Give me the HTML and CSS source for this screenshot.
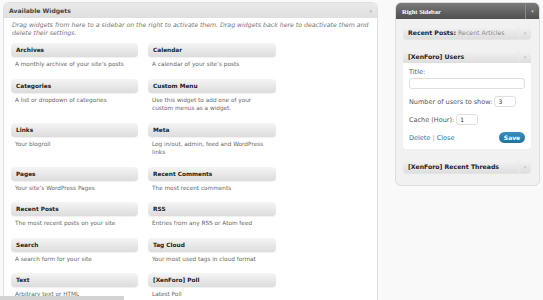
FILE: index.html
```html
<!DOCTYPE html>
<html>
<head>
  <title>Widgets</title>
  <link rel="stylesheet" href="styles.css">
</head>

<body>
  <div class="page">
    <div class="col-left">
      <div class="holder">
        <div class="holder-head">
          <span>Available Widgets</span>
          <span class="holder-arrow">&#9662;</span>
        </div>
        <p class="holder-desc">Drag widgets from here to a sidebar on the right to activate them. Drag widgets back here to deactivate them and delete their settings.</p>

        <div class="widget-grid">
          <div class="widget">
            <div class="widget-top">Archives</div>
            <div class="widget-desc">A monthly archive of your site&rsquo;s posts</div>
          </div>
          <div class="widget">
            <div class="widget-top">Calendar</div>
            <div class="widget-desc">A calendar of your site&rsquo;s posts</div>
          </div>
          <div class="widget">
            <div class="widget-top">Categories</div>
            <div class="widget-desc">A list or dropdown of categories</div>
          </div>
          <div class="widget">
            <div class="widget-top">Custom Menu</div>
            <div class="widget-desc">Use this widget to add one of your custom menus as a widget.</div>
          </div>
          <div class="widget">
            <div class="widget-top">Links</div>
            <div class="widget-desc">Your blogroll</div>
          </div>
          <div class="widget">
            <div class="widget-top">Meta</div>
            <div class="widget-desc">Log in/out, admin, feed and WordPress links</div>
          </div>
          <div class="widget">
            <div class="widget-top">Pages</div>
            <div class="widget-desc">Your site&rsquo;s WordPress Pages</div>
          </div>
          <div class="widget">
            <div class="widget-top">Recent Comments</div>
            <div class="widget-desc">The most recent comments</div>
          </div>
          <div class="widget">
            <div class="widget-top">Recent Posts</div>
            <div class="widget-desc">The most recent posts on your site</div>
          </div>
          <div class="widget">
            <div class="widget-top">RSS</div>
            <div class="widget-desc">Entries from any RSS or Atom feed</div>
          </div>
          <div class="widget">
            <div class="widget-top">Search</div>
            <div class="widget-desc">A search form for your site</div>
          </div>
          <div class="widget">
            <div class="widget-top">Tag Cloud</div>
            <div class="widget-desc">Your most used tags in cloud format</div>
          </div>
          <div class="widget">
            <div class="widget-top">Text</div>
            <div class="widget-desc">Arbitrary text or HTML</div>
          </div>
          <div class="widget">
            <div class="widget-top">[XenForo] Poll</div>
            <div class="widget-desc">Latest Poll</div>
          </div>
        </div>
      </div>
    </div>

    <div class="col-right">
      <div class="sidebar">
        <div class="sidebar-head">
          <span>Right Sidebar</span>
          <span class="sidebar-arrow">&#9662;</span>
        </div>
        <div class="sidebar-body">
          <div class="s-widget">
            <div class="s-widget-top">
              <span class="s-title">Recent Posts: <span class="in-title">Recent Articles</span></span>
              <span class="s-arrow">&#9662;</span>
            </div>
          </div>

          <div class="s-widget open">
            <div class="s-widget-top">
              <span class="s-title">[XenForo] Users</span>
              <span class="s-arrow">&#9662;</span>
            </div>
            <div class="s-widget-body">
              <p class="field-label">Title:</p>
              <input class="field wide" type="text" value="">
              <div class="field-row">
                <span>Number of users to show:</span>
                <input class="field small" type="text" value="3">
              </div>
              <div class="field-row">
                <span>Cache (Hour):</span>
                <input class="field small" type="text" value="1">
              </div>
              <div class="actions">
                <span><a href="#">Delete</a> <span class="sep">|</span> <a href="#">Close</a></span>
                <button type="button" class="save">Save</button>
              </div>
            </div>
          </div>

          <div class="s-widget">
            <div class="s-widget-top">
              <span class="s-title">[XenForo] Recent Threads</span>
              <span class="s-arrow">&#9662;</span>
            </div>
          </div>
        </div>
      </div>
    </div>
  </div>

  <div class="scroll-thumb"></div>
</body>
</html>
```

FILE: styles.css
```css
body {
  margin: 0;
  background-color: #F9F9F9;
  color: #333;
  font-family: 'DejaVu Sans', Verdana, sans-serif;
  overflow: hidden;
}

.page {
  display: flex;
  height: 300px;
}

/* left: available widgets */

.col-left {
  width: 378px;
  padding: 2px 0 0 3px;
  box-sizing: border-box;
}

.holder {
  height: 100%;
  background: #fff;
  border: 1px solid #DFDFDF;
  border-bottom: none;
  border-radius: 6px 6px 0 0;
}

.holder-head {
  height: 15px;
  padding: 0 5px 0 5px;
  display: flex;
  align-items: center;
  justify-content: space-between;
  background: linear-gradient(#E9E9E9, #DFDFDF);
  border-radius: 5px 5px 0 0;
  color: #464646;
  font-size: 6.1px;
  font-weight: bold;
}

.holder-arrow {
  color: #B5B5B5;
  font-size: 5px;
  font-weight: normal;
}

.holder-desc {
  margin: 3px 0 0;
  padding: 0 8px;
  color: #777;
  font-size: 6.2px;
  font-style: italic;
  line-height: 8px;
}

.widget-grid {
  display: grid;
  grid-template-columns: 127px 128px;
  column-gap: 10px;
  padding: 6px 0 0 7px;
}

.widget-top {
  height: 14px;
  padding-left: 5px;
  display: flex;
  align-items: center;
  background: linear-gradient(#F5F5F5, #DCDCDC);
  border-radius: 4px;
  box-shadow: 0 1px 1px rgba(0, 0, 0, 0.06);
  color: #222;
  font-size: 5.8px;
  font-weight: bold;
}

.widget-desc {
  margin-bottom: 10px;
  padding: 3px 4px 0;
  color: #666;
  font-size: 5.75px;
  line-height: 8.5px;
}

/* right: sidebar */

.col-right {
  flex: 1;
}

.sidebar {
  margin: 2px 3px 0 17px;
  padding-bottom: 12px;
  background: #F1F1F1;
  border: 1px solid #DDDDDD;
  border-radius: 6px;
}

.sidebar-head {
  height: 16px;
  padding: 0 0 0 6px;
  display: flex;
  align-items: center;
  justify-content: space-between;
  background: linear-gradient(#7A7A7A, #505050);
  border-radius: 5px 5px 0 0;
  color: #fff;
  font-family: 'Liberation Serif', serif;
  font-size: 6.5px;
  font-weight: bold;
}

.sidebar-arrow {
  width: 13px;
  height: 100%;
  display: flex;
  align-items: center;
  justify-content: center;
  border-left: 1px solid #8A8A8A;
  color: #C8C8C8;
  font-family: 'DejaVu Sans', sans-serif;
  font-size: 5px;
  font-weight: normal;
}

.sidebar-body {
  padding: 7px 8px 0 7px;
  display: flex;
  flex-direction: column;
  gap: 11px;
}

.s-widget-top {
  height: 13px;
  display: flex;
  align-items: center;
  justify-content: space-between;
  background: linear-gradient(#F3F3F3, #DEDEDE);
  border-radius: 4px;
  box-shadow: 0 1px 1px rgba(0, 0, 0, 0.06);
}

.open .s-widget-top {
  border-radius: 4px 4px 0 0;
  box-shadow: none;
}

.s-title {
  padding-left: 5px;
  color: #222;
  font-size: 6.2px;
  font-weight: bold;
  white-space: nowrap;
}

.in-title {
  color: #8A8A8A;
  font-weight: normal;
}

.s-arrow {
  width: 12px;
  height: 100%;
  display: flex;
  align-items: center;
  justify-content: center;
  border-left: 1px solid #EAEAEA;
  color: #C4C4C4;
  font-size: 5px;
}

.s-widget-body {
  padding: 5px 6px 6px;
  background: #fff;
  border-radius: 0 0 4px 4px;
  color: #555;
  font-size: 6.5px;
}

.field-label {
  margin: 0 0 2px;
  line-height: 8px;
}

.field {
  height: 11px;
  padding: 0 3px;
  box-sizing: border-box;
  background: #fff;
  border: 1px solid #DFDFDF;
  border-radius: 3px;
  color: #333;
  font-family: 'DejaVu Sans', sans-serif;
  font-size: 6px;
}

.field.wide {
  display: block;
  width: 100%;
  margin-bottom: 7px;
}

.field.small {
  width: 22px;
}

.field-row {
  height: 11px;
  margin-bottom: 7px;
  display: flex;
  align-items: center;
  gap: 2px;
}

.actions {
  height: 11px;
  display: flex;
  align-items: center;
  justify-content: space-between;
}

.actions a {
  color: #21759B;
  text-decoration: none;
}

.sep {
  color: #999;
}

.save {
  width: 26px;
  height: 11px;
  padding: 0;
  background: linear-gradient(#3B8DBD, #21759B);
  border: none;
  border-radius: 6px;
  color: #fff;
  font-family: 'DejaVu Sans', sans-serif;
  font-size: 6px;
  font-weight: bold;
}

.scroll-thumb {
  position: fixed;
  left: 0;
  bottom: 0;
  width: 124px;
  height: 4px;
  background: #D3D3D3;
}
```
